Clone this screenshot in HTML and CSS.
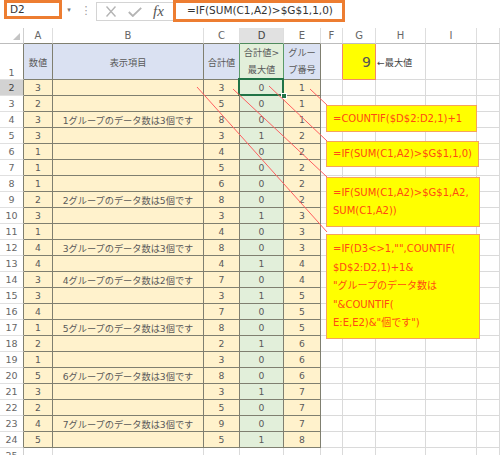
FILE: index.html
```html
<!DOCTYPE html>
<html lang="ja">
<head>
<meta charset="utf-8">
<link rel="stylesheet" href="styles.css">
</head>
<body>
<div class="fbar">
  <div class="namebox">D2</div>
  <div class="dd">&#9662;</div>
  <div class="sep">&#8942;</div>
  <div class="btns">
    <svg class="ic-x" width="10" height="11" viewBox="0 0 10 11"><path d="M0.5 0.5 L9.5 10.5 M9.5 0.5 L0.5 10.5" stroke="#b4b4b4" stroke-width="1.4" fill="none"/></svg>
    <svg class="ic-ok" width="14" height="10" viewBox="0 0 14 10"><path d="M0.8 5 L4.8 9 L13.2 0.8" stroke="#b4b4b4" stroke-width="1.8" fill="none"/></svg>
    <span class="fx">fx</span>
  </div>
  <div class="formula">=IF(SUM(C1,A2)&gt;$G$1,1,0)</div>
</div>

<div class="sheet">
  <div class="row hdr">
    <div class="c corner"><svg width="7" height="7" viewBox="0 0 7 7"><polygon points="7,0 7,7 0,7" fill="#c4c4c4"/></svg></div>
    <div class="c ch tb">A</div>
    <div class="c ch tb">B</div>
    <div class="c ch tb">C</div>
    <div class="c ch tb on">D</div>
    <div class="c ch tb">E</div>
    <div class="c ch">F</div>
    <div class="c ch">G</div>
    <div class="c ch">H</div>
    <div class="c ch">I</div>
    <div class="c ch"></div>
  </div>
  <div class="row r1">
    <div class="c rh tl bottom">1</div>
    <div class="c hb">数値</div>
    <div class="c hb">表示項目</div>
    <div class="c hb gr">合計値</div>
    <div class="c hd"><span class="two">合計値&gt;<br>最大値</span></div>
    <div class="c hb"><span class="two">グルー<br>プ番号</span></div>
    <div class="c e f1"></div>
    <div class="c g1">9</div>
    <div class="c e h1">←最大値</div>
    <div class="c e"></div>
    <div class="c e"></div>
  </div>
  <div class="row"><div class="c rh tl on">2</div><div class="c t">3</div><div class="c t"></div><div class="c t">3</div><div class="c d sel">0</div><div class="c t">1</div><div class="c e"></div><div class="c e"></div><div class="c e"></div><div class="c e"></div><div class="c e"></div></div>
  <div class="row"><div class="c rh tl">3</div><div class="c t">2</div><div class="c t"></div><div class="c t">5</div><div class="c d">0</div><div class="c t">1</div><div class="c e"></div><div class="c e"></div><div class="c e"></div><div class="c e"></div><div class="c e"></div></div>
  <div class="row"><div class="c rh tl">4</div><div class="c t">3</div><div class="c t">1グループのデータ数は3個です</div><div class="c t">8</div><div class="c d">0</div><div class="c t">1</div><div class="c e"></div><div class="c e"></div><div class="c e"></div><div class="c e"></div><div class="c e"></div></div>
  <div class="row"><div class="c rh tl">5</div><div class="c t">3</div><div class="c t"></div><div class="c t">3</div><div class="c d">1</div><div class="c t">2</div><div class="c e"></div><div class="c e"></div><div class="c e"></div><div class="c e"></div><div class="c e"></div></div>
  <div class="row"><div class="c rh tl">6</div><div class="c t">1</div><div class="c t"></div><div class="c t">4</div><div class="c d">0</div><div class="c t">2</div><div class="c e"></div><div class="c e"></div><div class="c e"></div><div class="c e"></div><div class="c e"></div></div>
  <div class="row"><div class="c rh tl">7</div><div class="c t">1</div><div class="c t"></div><div class="c t">5</div><div class="c d">0</div><div class="c t">2</div><div class="c e"></div><div class="c e"></div><div class="c e"></div><div class="c e"></div><div class="c e"></div></div>
  <div class="row"><div class="c rh tl">8</div><div class="c t">1</div><div class="c t"></div><div class="c t">6</div><div class="c d">0</div><div class="c t">2</div><div class="c e"></div><div class="c e"></div><div class="c e"></div><div class="c e"></div><div class="c e"></div></div>
  <div class="row"><div class="c rh tl">9</div><div class="c t">2</div><div class="c t">2グループのデータ数は5個です</div><div class="c t">8</div><div class="c d">0</div><div class="c t">2</div><div class="c e"></div><div class="c e"></div><div class="c e"></div><div class="c e"></div><div class="c e"></div></div>
  <div class="row"><div class="c rh tl">10</div><div class="c t">3</div><div class="c t"></div><div class="c t">3</div><div class="c d">1</div><div class="c t">3</div><div class="c e"></div><div class="c e"></div><div class="c e"></div><div class="c e"></div><div class="c e"></div></div>
  <div class="row"><div class="c rh tl">11</div><div class="c t">1</div><div class="c t"></div><div class="c t">4</div><div class="c d">0</div><div class="c t">3</div><div class="c e"></div><div class="c e"></div><div class="c e"></div><div class="c e"></div><div class="c e"></div></div>
  <div class="row"><div class="c rh tl">12</div><div class="c t">4</div><div class="c t">3グループのデータ数は3個です</div><div class="c t">8</div><div class="c d">0</div><div class="c t">3</div><div class="c e"></div><div class="c e"></div><div class="c e"></div><div class="c e"></div><div class="c e"></div></div>
  <div class="row"><div class="c rh tl">13</div><div class="c t">4</div><div class="c t"></div><div class="c t">4</div><div class="c d">1</div><div class="c t">4</div><div class="c e"></div><div class="c e"></div><div class="c e"></div><div class="c e"></div><div class="c e"></div></div>
  <div class="row"><div class="c rh tl">14</div><div class="c t">3</div><div class="c t">4グループのデータ数は2個です</div><div class="c t">7</div><div class="c d">0</div><div class="c t">4</div><div class="c e"></div><div class="c e"></div><div class="c e"></div><div class="c e"></div><div class="c e"></div></div>
  <div class="row"><div class="c rh tl">15</div><div class="c t">3</div><div class="c t"></div><div class="c t">3</div><div class="c d">1</div><div class="c t">5</div><div class="c e"></div><div class="c e"></div><div class="c e"></div><div class="c e"></div><div class="c e"></div></div>
  <div class="row"><div class="c rh tl">16</div><div class="c t">4</div><div class="c t"></div><div class="c t">7</div><div class="c d">0</div><div class="c t">5</div><div class="c e"></div><div class="c e"></div><div class="c e"></div><div class="c e"></div><div class="c e"></div></div>
  <div class="row"><div class="c rh tl">17</div><div class="c t">1</div><div class="c t">5グループのデータ数は3個です</div><div class="c t">8</div><div class="c d">0</div><div class="c t">5</div><div class="c e"></div><div class="c e"></div><div class="c e"></div><div class="c e"></div><div class="c e"></div></div>
  <div class="row"><div class="c rh tl">18</div><div class="c t">2</div><div class="c t"></div><div class="c t">2</div><div class="c d">1</div><div class="c t">6</div><div class="c e"></div><div class="c e"></div><div class="c e"></div><div class="c e"></div><div class="c e"></div></div>
  <div class="row"><div class="c rh tl">19</div><div class="c t">1</div><div class="c t"></div><div class="c t">3</div><div class="c d">0</div><div class="c t">6</div><div class="c e"></div><div class="c e"></div><div class="c e"></div><div class="c e"></div><div class="c e"></div></div>
  <div class="row"><div class="c rh tl">20</div><div class="c t">5</div><div class="c t">6グループのデータ数は3個です</div><div class="c t">8</div><div class="c d">0</div><div class="c t">6</div><div class="c e"></div><div class="c e"></div><div class="c e"></div><div class="c e"></div><div class="c e"></div></div>
  <div class="row"><div class="c rh tl">21</div><div class="c t">3</div><div class="c t"></div><div class="c t">3</div><div class="c d">1</div><div class="c t">7</div><div class="c e"></div><div class="c e"></div><div class="c e"></div><div class="c e"></div><div class="c e"></div></div>
  <div class="row"><div class="c rh tl">22</div><div class="c t">2</div><div class="c t"></div><div class="c t">5</div><div class="c d">0</div><div class="c t">7</div><div class="c e"></div><div class="c e"></div><div class="c e"></div><div class="c e"></div><div class="c e"></div></div>
  <div class="row"><div class="c rh tl">23</div><div class="c t">4</div><div class="c t">7グループのデータ数は3個です</div><div class="c t">9</div><div class="c d">0</div><div class="c t">7</div><div class="c e"></div><div class="c e"></div><div class="c e"></div><div class="c e"></div><div class="c e"></div></div>
  <div class="row"><div class="c rh tl">24</div><div class="c t">5</div><div class="c t"></div><div class="c t">5</div><div class="c d">1</div><div class="c t">8</div><div class="c e"></div><div class="c e"></div><div class="c e"></div><div class="c e"></div><div class="c e"></div></div>
  <div class="row"><div class="c rh">25</div><div class="c e"></div><div class="c e"></div><div class="c e"></div><div class="c e"></div><div class="c e"></div><div class="c e"></div><div class="c e"></div><div class="c e"></div><div class="c e"></div><div class="c e"></div></div>
</div>

<svg class="leaders" width="500" height="455" viewBox="0 0 500 455">
  <line x1="310" y1="89" x2="327" y2="105"/>
  <line x1="269" y1="86" x2="327" y2="141"/>
  <line x1="233" y1="89" x2="327" y2="177"/>
  <line x1="197" y1="87" x2="327" y2="232"/>
</svg>

<div class="callout k1">=COUNTIF($D$2:D2,1)+1</div>
<div class="callout k2">=IF(SUM(C1,A2)&gt;$G$1,1,0)</div>
<div class="callout k3"><span>=IF(SUM(C1,A2)&gt;$G$1,A2,</span><span>SUM(C1,A2))</span></div>
<div class="callout k4"><span>=IF(D3&lt;&gt;1,"",COUNTIF(</span><span>$D$2:D2,1)+1&amp;</span><span>"グループのデータ数は</span><span>"&amp;COUNTIF(</span><span>E:E,E2)&amp;"個です")</span></div>
</body>
</html>
```

FILE: styles.css
```css
html, body {
  margin: 0;
  padding: 0;
}
body {
  width: 500px;
  height: 455px;
  overflow: hidden;
  background: #ffffff;
  position: relative;
  font-family: "DejaVu Sans", "Noto Sans CJK JP", sans-serif;
}

/* formula bar */
.fbar {
  height: 28px;
  display: flex;
  align-items: flex-start;
}
.namebox {
  margin-left: 4px;
  margin-top: 0;
  width: 58px;
  height: 19px;
  box-sizing: border-box;
  border: 3px solid #ed7d31;
  font-size: 10.5px;
  line-height: 13px;
  color: #333;
  padding-left: 3px;
  background: #fff;
}
.dd {
  width: 14px;
  height: 19px;
  font-size: 7px;
  color: #777;
  display: flex;
  align-items: center;
  justify-content: center;
}
.sep {
  width: 20px;
  height: 21px;
  font-size: 11px;
  color: #999;
  display: flex;
  align-items: center;
  justify-content: center;
}
.btns {
  width: 77px;
  height: 19px;
  margin-top: 2px;
  box-sizing: border-box;
  border: 1px solid #d4d4d4;
  border-right: none;
  display: flex;
  align-items: center;
  padding-left: 9px;
}
.ic-x { margin-right: 12px; }
.ic-ok { margin-right: 11px; }
.fx {
  font-family: "Liberation Serif", "DejaVu Serif", serif;
  font-style: italic;
  font-size: 15px;
  color: #555;
  line-height: 15px;
}
.formula {
  width: 172px;
  height: 22px;
  box-sizing: border-box;
  border: 3px solid #ed7d31;
  font-size: 10.5px;
  line-height: 15px;
  color: #333;
  padding-left: 11px;
  white-space: nowrap;
}

/* sheet */
.sheet {
  display: flex;
  flex-direction: column;
}
.row {
  display: grid;
  grid-template-columns: 24px 29px 151px 36px 44px 37px 22px 33px 50px 51px 23px;
  height: 16px;
}
.row.r1 { height: 36px; }
.c {
  box-sizing: border-box;
  border-right: 1px solid #dadada;
  border-bottom: 1px solid #dadada;
  display: flex;
  align-items: center;
  justify-content: center;
  font-size: 9.2px;
  color: #595959;
  white-space: nowrap;
}
.corner {
  justify-content: flex-end;
  align-items: flex-end;
  padding: 0 3px 3px 0;
  border-right-color: #cfcfcf;
  border-bottom-color: #bdbdbd;
}
.ch {
  font-size: 10px;
  color: #666;
  border-right-color: #dedede;
  border-bottom-color: #bdbdbd;
}
.ch.tb { border-bottom-color: #7f7f70; }
.ch.on {
  background: #e1e1e1;
  color: #444;
  border-bottom-color: #4f8a5c;
}
.rh {
  font-size: 9.5px;
  color: #666;
  border-right-color: #cfcfcf;
  border-bottom-color: #e0e0e0;
}
.rh.tl { border-right-color: #7f7f70; }
.rh.bottom {
  align-items: flex-end;
  padding-bottom: 1px;
}
.rh.on {
  background: #d2d2d2;
  color: #444;
}

.hb {
  background: #dae1f2;
  border-color: #7f7f70;
}
.hb.gr { border-right-color: #5b9a68; }
.hd {
  background: #e2efda;
  border-right-color: #5b9a68;
  border-bottom-color: #7f7f70;
}
.two {
  white-space: normal;
  text-align: center;
  line-height: 16.5px;
}
.t {
  background: #fff2cc;
  border-color: #7f7f70;
}
.d {
  background: #e2efda;
  border-color: #7f7f70;
}
.e {
  border-right-color: #dadada;
  border-bottom-color: #dadada;
}
.f1 { border-right-color: #f08a68; }
.g1 {
  background: #ffff00;
  border-right-color: #f08a68;
  border-bottom-color: #f08a68;
  justify-content: flex-end;
  padding-right: 4px;
  font-size: 14px;
  color: #555;
}
.h1 {
  justify-content: flex-start;
  padding-left: 1px;
  color: #444;
  font-size: 9.2px;
}

/* selected cell */
.sel { position: relative; }
.sel::before {
  content: "";
  position: absolute;
  left: -2px;
  top: -2px;
  width: 46px;
  height: 18px;
  box-sizing: border-box;
  border: 2px solid #217346;
}
.sel::after {
  content: "";
  position: absolute;
  right: -4px;
  bottom: -4px;
  width: 6px;
  height: 6px;
  box-sizing: border-box;
  background: #217346;
  border: 1px solid #fff;
}

/* leader lines */
.leaders {
  position: absolute;
  left: 0;
  top: 0;
  pointer-events: none;
}
.leaders line {
  stroke: #ff5f5f;
  stroke-width: 1;
}

/* callouts */
.callout {
  position: absolute;
  left: 326px;
  box-sizing: border-box;
  background: #ffff00;
  border: 1px solid #f6a35c;
  color: #ff4a12;
  font-size: 10px;
  line-height: 18px;
  padding-left: 6px;
  display: flex;
  flex-direction: column;
  justify-content: center;
  white-space: nowrap;
}
.k1 { top: 105px; width: 151px; height: 27px; }
.k2 { top: 141px; width: 153px; height: 26px; }
.k3 { top: 177px; width: 154px; height: 50px; }
.k4 { top: 234px; width: 154px; height: 105px; line-height: 18.6px; }
```
